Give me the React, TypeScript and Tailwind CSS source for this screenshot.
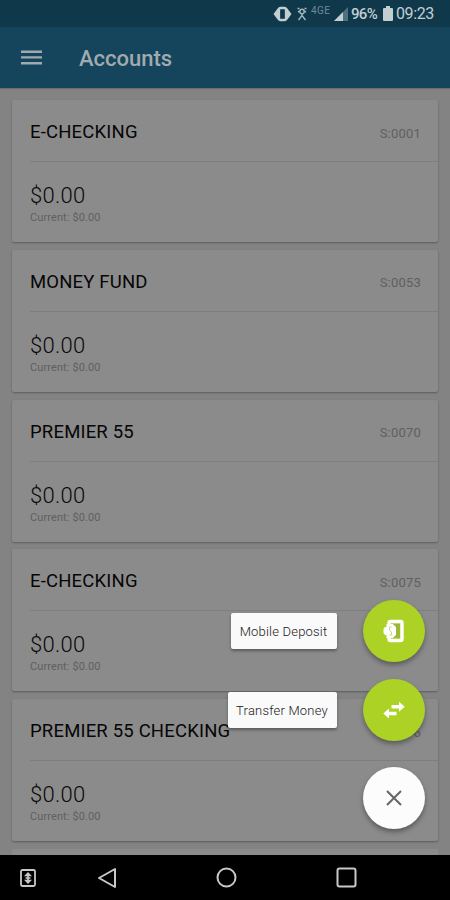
const accounts = [
  { name: 'E-CHECKING', id: 'S:0001' },
  { name: 'MONEY FUND', id: 'S:0053' },
  { name: 'PREMIER 55', id: 'S:0070' },
  { name: 'E-CHECKING', id: 'S:0075' },
  { name: 'PREMIER 55 CHECKING', id: 'S:0076' },
];

function StatusBar() {
  return (
    <div className="flex h-[27px] shrink-0 items-center justify-end bg-[#10384b] pr-[16px] text-[#c3ced3]">
      <svg className="mr-[5px] h-[16px] w-[19px]" viewBox="0 0 19 16">
        <path d="M5 2 .5 8 5 14zM14 2l4.500 6-4.500 6z" fill="currentColor" />
        <rect x="6" y="2" width="7" height="12" rx="1.500" fill="none" stroke="currentColor" strokeWidth="2.300" />
      </svg>
      <svg className="mr-[4px] h-[14px] w-[10px]" viewBox="0 0 10 14" fill="none" stroke="#a3b3ba" strokeWidth="1.400">
        <path d="M.5 1.500h2M7.500 1.500h2M1 5l2-1M9 5 7 4M5 7v2M5 8.500 1.500 13M5 8.500l3.500 4.500" />
        <circle cx="5" cy="4.500" r="2.200" />
      </svg>
      <span className="mr-[2px] w-[21px] -translate-y-[3px] text-[10px] leading-none tracking-[0.4px] text-[#6f8995]">4GE</span>
      <svg className="mr-[3px] h-[14px] w-[14px]" viewBox="0 0 14 14">
        <path d="M0 14 14 0v14z" fill="#526f7c" />
        <path d="M0 14 9 5v9z" fill="#c3ced3" />
      </svg>
      <span className="mr-[5px] w-[27px] pt-[1px] text-[15px] font-medium leading-none tracking-[-0.7px]">96%</span>
      <svg className="mr-[3px] h-[15px] w-[10px]" viewBox="0 0 10 15">
        <path d="M3 0h4v2h2a1 1 0 0 1 1 1v11a1 1 0 0 1-1 1H1a1 1 0 0 1-1-1V3a1 1 0 0 1 1-1h2z" fill="currentColor" />
      </svg>
      <span className="w-[38px] pt-[1px] text-[16px] leading-none tracking-[-0.4px] whitespace-nowrap">09:23</span>
    </div>
  );
}

function AccountCard({ name, id }: { name: string; id: string }) {
  return (
    <section className="h-[142px] shrink-0 rounded-[2px] bg-[#8b8b8b] pl-[18px] shadow-[0_1px_2px_rgba(0,0,0,0.3)]">
      <div className="flex h-[62px] items-center justify-between border-b border-[#7e7e7e] pr-[17px] pt-[3px]">
        <h2 className="text-[18.500px] font-normal leading-[24px] tracking-[0.180px] text-[#060606]">{name}</h2>
        <span className="pt-[3px] text-[13px] leading-[16px] tracking-[0.2px] text-[#606060]">{id}</span>
      </div>
      <p className="pt-[20px] text-[22px] font-light leading-[28px] tracking-[0.3px] text-[#080808]">$0.00</p>
      <p className="text-[11px] leading-[16px] tracking-[0.1px] text-[#606060]">Current: $0.00</p>
    </section>
  );
}

function NavigationBar() {
  return (
    <nav className="relative z-10 flex h-[45px] shrink-0 items-center bg-black pl-[20px] text-[#c8c8c8]">
      <svg className="h-[18px] w-[16px]" viewBox="0 0 16 18" fill="none" stroke="currentColor">
        <rect x="1" y="1" width="14" height="16" rx="1.500" strokeWidth="1.800" />
        <path d="M8 5v8M5.500 9h5" strokeWidth="1.700" />
        <path d="m4 7.200 4-4.200 4 4.200zM4 10.800 8 15l4-4.200z" fill="currentColor" stroke="none" />
      </svg>
      <svg className="ml-[61px] h-[22px] w-[20px]" viewBox="0 0 20 22" fill="none" stroke="currentColor" strokeWidth="2" strokeLinejoin="round">
        <path d="M18 2v18L2 11z" />
      </svg>
      <svg className="ml-[99px] h-[21px] w-[21px]" viewBox="0 0 21 21" fill="none" stroke="currentColor" strokeWidth="2">
        <circle cx="10.500" cy="10.500" r="9" />
      </svg>
      <svg className="ml-[99px] h-[21px] w-[21px]" viewBox="0 0 21 21" fill="none" stroke="currentColor" strokeWidth="2">
        <rect x="1.500" y="1.500" width="18" height="18" rx="2" />
      </svg>
    </nav>
  );
}

function ActionMenu() {
  const label = 'flex h-[36px] items-center justify-center rounded-[2px] bg-[#fafafa] text-[13px] font-light text-[#202020] shadow-[0_2px_3px_rgba(0,0,0,0.35)]';
  const button = 'flex h-[62px] w-[62px] items-center justify-center rounded-full shadow-[0_3px_5px_rgba(0,0,0,0.35)]';
  return (
    <div className="absolute right-[25.500px] top-[600px] flex flex-col items-end">
      <div className="flex items-center gap-[26px]">
        <span className={label + ' w-[106px] tracking-[0.2px] pt-[1px]'}>Mobile Deposit</span>
        <button className={button + ' bg-[#add226]'} aria-label="Mobile Deposit">
          <svg className="h-[24px] w-[22px]" viewBox="0 0 22 24">
            <rect x="6" y="2.500" width="13" height="19" rx="1.500" fill="none" stroke="white" strokeWidth="3.400" />
            <path d="M3.500 5H10l3 2.500v9L10 19H3.500v-3H2l-1.500-2V10L2 8h1.500z" fill="white" />
            <path d="M10 5h7v14h-7l3-3V8z" fill="#9db933" />
            <path d="M8.500 8H6.500v3l2 2v3H6.500" fill="none" stroke="#c6dc78" />
          </svg>
        </button>
      </div>
      <div className="mt-[17px] flex items-center gap-[26px]">
        <span className={label + ' w-[109px] tracking-[0.2px] pt-[1px]'}>Transfer Money</span>
        <button className={button + ' bg-[#add226]'} aria-label="Transfer Money">
          <svg className="h-[18px] w-[22px]" viewBox="0 0 22 18" fill="white">
            <path d="M8.500 4H16V.7l5.700 5-5.700 5V7.400H8.500zM13.500 10.800H6V7.500l-5.700 5 5.700 5V14.200h7.500z" />
          </svg>
        </button>
      </div>
      <button className={button + ' mt-[26px] bg-[#fcfcfc]'} aria-label="Close">
        <svg className="h-[16px] w-[16px]" viewBox="0 0 16 16" fill="none" stroke="#666" strokeWidth="2">
          <path d="m1 1 14 14M15 1 1 15" />
        </svg>
      </button>
    </div>
  );
}

export default function App() {
  return (
    <div className="relative flex h-[900px] w-[450px] flex-col overflow-hidden bg-[#838383] font-[Roboto,sans-serif]">
      <StatusBar />
      <header className="flex h-[61px] shrink-0 items-center bg-[#14455c] pl-[21px] text-[#a1aaae] shadow-[0_1px_1px_rgba(0,0,0,0.15)]">
        <svg className="h-[16px] w-[21px]" viewBox="0 0 21 16" fill="none" stroke="currentColor" strokeWidth="2.400">
          <path d="M0 1.700h21M0 7.400h21M0 13.200h21" />
        </svg>
        <h1 className="ml-[37px] pt-[2px] text-[22px] font-medium leading-[28px]">Accounts</h1>
      </header>
      <main className="flex min-h-0 flex-1 flex-col gap-[7.750px] overflow-hidden px-[12px] pt-[12px]">
        {accounts.map((account) => <AccountCard key={account.id} {...account} />)}
        <div className="h-[10px] shrink-0 rounded-t-[2px] bg-[#8b8b8b]" />
      </main>
      <NavigationBar />
      <ActionMenu />
    </div>
  );
}
